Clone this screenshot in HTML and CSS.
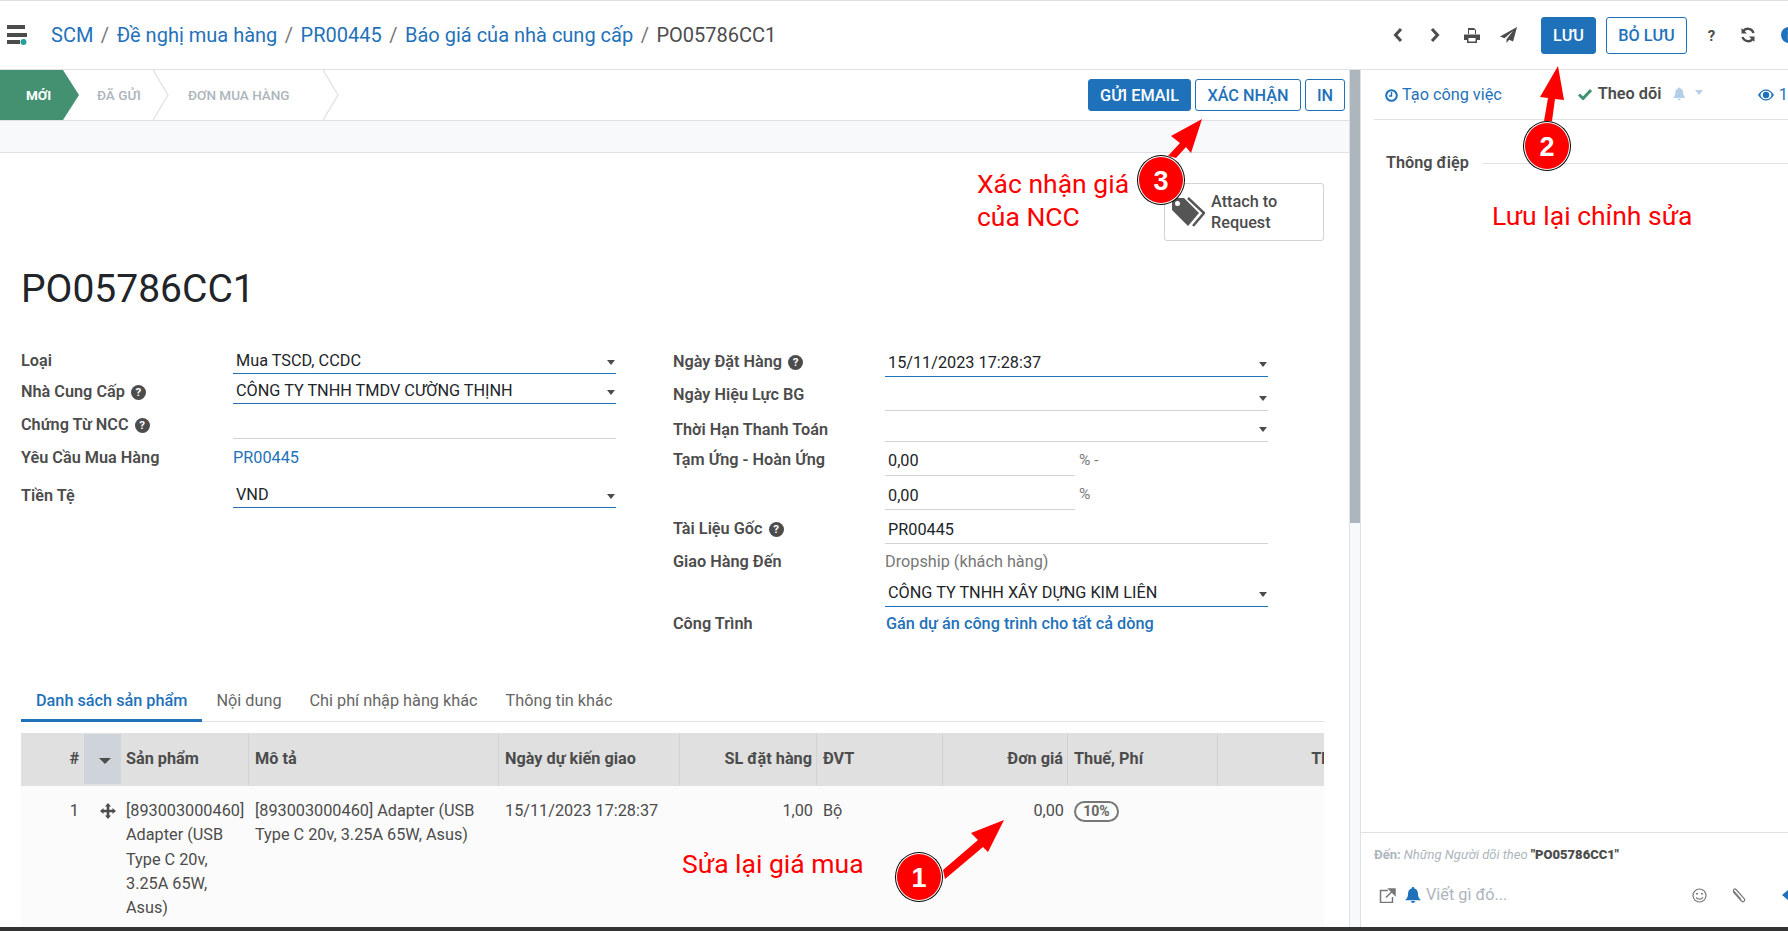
FILE: index.html
```html
<!DOCTYPE html>
<html lang="vi">
<head>
    <meta charset="UTF-8">
    <title>PO05786CC1</title>
    <link rel="stylesheet" href="styles.css">
</head>
<body>
<div class="page">
    <header class="topbar">
        <div class="topbar-left">
            <svg class="app-menu" width="22" height="20" viewBox="0 0 22 20">
                <rect x="0" y="0" width="18" height="4" fill="#4c4c4c"/>
                <rect x="0" y="8" width="20" height="4" fill="#4c4c4c"/>
                <rect x="0" y="15" width="13" height="4" fill="#4c4c4c"/>
                <circle cx="16.5" cy="17" r="3" fill="#2a9d9d"/>
            </svg>
            <nav class="breadcrumb">
                <a>SCM</a><span class="sep">/</span>
                <a>Đề nghị mua hàng</a><span class="sep">/</span>
                <a>PR00445</a><span class="sep">/</span>
                <a>Báo giá của nhà cung cấp</a><span class="sep">/</span>
                <span class="current">PO05786CC1</span>
            </nav>
        </div>
        <div class="topbar-right">
            <span class="tool"><svg width="10" height="16" viewBox="0 0 10 16"><path d="M8 2 2.5 8 8 14" fill="none" stroke="#4c4c4c" stroke-width="3"/></svg></span>
            <span class="tool"><svg width="10" height="16" viewBox="0 0 10 16"><path d="M2 2 7.5 8 2 14" fill="none" stroke="#4c4c4c" stroke-width="3"/></svg></span>
            <span class="tool"><svg width="16" height="15" viewBox="0 0 16 15"><path d="M4 0h6l2 2v4H4zM0 6.500h16V12h-3v3H3v-3H0z" fill="#4c4c4c"/><rect x="5" y="2" width="6" height="4" fill="#fff"/><rect x="4.500" y="10" width="7" height="3.500" fill="#fff"/></svg></span>
            <span class="tool"><svg width="17" height="16" viewBox="0 0 17 16"><path d="M17 0 0 9.500l4.500 1.800L13 4 6.500 12.200V16l2.600-3.200 4 1.700z" fill="#4c4c4c"/></svg></span>
            <button class="btn btn-primary btn-save">LƯU</button>
            <button class="btn btn-outline btn-discard">BỎ LƯU</button>
            <span class="tool tool-help">?</span>
            <span class="tool"><svg width="16" height="16" viewBox="0 0 16 16"><path d="M13.500 6A6 6 0 0 0 3 4.200M2.500 10A6 6 0 0 0 13 11.800" fill="none" stroke="#4c4c4c" stroke-width="2.400"/><path d="M1.500 1v5.500H7zM14.500 15V9.500H9z" fill="#4c4c4c"/></svg></span>
            <span class="tool tool-info"><svg width="16" height="16" viewBox="0 0 16 16"><circle cx="8" cy="8" r="8" fill="#1f72b9"/><rect x="6.800" y="7" width="2.400" height="5.500" fill="#fff"/><rect x="6.800" y="3.500" width="2.400" height="2.200" fill="#fff"/></svg></span>
        </div>
    </header>

    <div class="workspace">
        <main class="main">
            <div class="statusbar">
                <div class="steps">
                    <span class="step-active">MỚI</span>
                    <span class="step step-sent">ĐÃ GỬI</span>
                    <svg class="chevron" width="16" height="50" viewBox="0 0 16 50"><path d="M0 0 15 25 0 50" fill="none" stroke="#dee2e6" stroke-width="1.300"/></svg>
                    <span class="step step-order">ĐƠN MUA HÀNG</span>
                    <svg class="chevron" width="16" height="50" viewBox="0 0 16 50"><path d="M0 0 15 25 0 50" fill="none" stroke="#dee2e6" stroke-width="1.300"/></svg>
                </div>
                <div class="status-actions">
                    <button class="btn btn-primary btn-email">GỬI EMAIL</button>
                    <button class="btn btn-outline btn-confirm">XÁC NHẬN</button>
                    <button class="btn btn-outline btn-print">IN</button>
                </div>
            </div>
            <div class="band"></div>

            <section class="sheet">
                <div class="button-box">
                    <div class="stat-button">
                        <svg width="34" height="30" viewBox="0 0 34 30">
                            <path d="M1 1h12l15 15-11 13L1 13z" fill="#555"/>
                            <circle cx="6.500" cy="6.500" r="2.500" fill="#fff"/>
                            <path d="M17 1 33 16 22 29" fill="none" stroke="#555" stroke-width="2.500"/>
                        </svg>
                        <span>Attach to<br>Request</span>
                    </div>
                </div>
                <h1 class="title">PO05786CC1</h1>

                <div class="groups">
                    <div class="group group-left">
                        <div class="field row-a"><label>Loại</label><div class="value select line-focus">Mua TSCD, CCDC<i class="caret"></i></div></div>
                        <div class="field row-b"><label>Nhà Cung Cấp <i class="help">?</i></label><div class="value select line-focus">CÔNG TY TNHH TMDV CƯỜNG THỊNH<i class="caret"></i></div></div>
                        <div class="field row-c"><label>Chứng Từ NCC <i class="help">?</i></label><div class="value line"></div></div>
                        <div class="field row-d"><label>Yêu Cầu Mua Hàng</label><a class="value link">PR00445</a></div>
                        <div class="field row-e"><label>Tiền Tệ</label><div class="value select line-focus">VND<i class="caret"></i></div></div>
                    </div>
                    <div class="group group-right">
                        <div class="field row-1"><label>Ngày Đặt Hàng <i class="help">?</i></label><div class="value select line-focus">15/11/2023 17:28:37<i class="caret"></i></div></div>
                        <div class="field row-2"><label>Ngày Hiệu Lực BG</label><div class="value select line"><i class="caret"></i></div></div>
                        <div class="field row-3 field-flush"><label>Thời Hạn Thanh Toán</label><div class="value select line"><i class="caret"></i></div></div>
                        <div class="field row-4 row-advance"><label>Tạm Ứng - Hoàn Ứng</label><div class="percent"><div class="value line">0,00</div><span class="unit">% -</span></div></div>
                        <div class="field row-4"><label></label><div class="percent"><div class="value line">0,00</div><span class="unit">%</span></div></div>
                        <div class="field row-4"><label>Tài Liệu Gốc <i class="help">?</i></label><div class="value line">PR00445</div></div>
                        <div class="field row-7 field-flush"><label>Giao Hàng Đến</label><div class="value muted">Dropship (khách hàng)</div></div>
                        <div class="field row-8"><label></label><div class="value select line-focus">CÔNG TY TNHH XÂY DỰNG KIM LIÊN<i class="caret"></i></div></div>
                        <div class="field row-9 field-flush"><label>Công Trình</label><a class="value link link-strong">Gán dự án công trình cho tất cả dòng</a></div>
                    </div>
                </div>

                <div class="tabs">
                    <a class="tab tab-active">Danh sách sản phẩm</a>
                    <a class="tab">Nội dung</a>
                    <a class="tab">Chi phí nhập hàng khác</a>
                    <a class="tab">Thông tin khác</a>
                </div>

                <div class="table-wrap">
                    <table class="lines">
                        <colgroup>
                            <col class="c-num"><col class="c-handle"><col class="c-product"><col class="c-desc"><col class="c-date"><col class="c-qty"><col class="c-uom"><col class="c-price"><col class="c-tax"><col class="c-total">
                        </colgroup>
                        <thead>
                            <tr>
                                <th class="right no-div num">#</th>
                                <th class="sort no-div"><i class="caret caret-big"></i></th>
                                <th class="product">Sản phẩm</th>
                                <th>Mô tả</th>
                                <th>Ngày dự kiến giao</th>
                                <th class="right">SL đặt hàng</th>
                                <th>ĐVT</th>
                                <th class="right">Đơn giá</th>
                                <th>Thuế, Phí</th>
                                <th class="right no-div">Thành tiền</th>
                            </tr>
                        </thead>
                        <tbody>
                            <tr>
                                <td class="right num">1</td>
                                <td class="handle">
                                    <svg width="16" height="16" viewBox="0 0 16 16"><path d="M8 0 11 3.500H9.300v3.200h3.200V5L16 8l-3.500 3V9.300H9.300v3.200H11L8 16l-3-3.500h1.700V9.300H3.500V11L0 8l3.500-3v1.700h3.200V3.500H5z" fill="#4c4c4c"/></svg>
                                </td>
                                <td class="product">[893003000460] Adapter (USB Type C 20v, 3.25A 65W, Asus)</td>
                                <td>[893003000460] Adapter (USB Type C 20v, 3.25A 65W, Asus)</td>
                                <td>15/11/2023 17:28:37</td>
                                <td class="right">1,00</td>
                                <td>Bộ</td>
                                <td class="right">0,00</td>
                                <td><span class="badge">10%</span></td>
                                <td></td>
                            </tr>
                        </tbody>
                    </table>
                </div>
            </section>
        </main>

        <div class="scrollbar"><div class="thumb"></div></div>

        <aside class="chatter">
            <div class="chatter-top">
                <a class="activity">
                    <svg width="13" height="13" viewBox="0 0 13 13"><circle cx="6.500" cy="6.500" r="5.300" fill="none" stroke="#1f72b9" stroke-width="2"/><path d="M6.500 3v4H4" fill="none" stroke="#1f72b9" stroke-width="1.400"/></svg>
                    Tạo công việc
                </a>
                <span class="follow">
                    <svg width="14" height="12" viewBox="0 0 14 12"><path d="M1 6.500 5 10.500 13 2" fill="none" stroke="#449172" stroke-width="3"/></svg>
                    Theo dõi
                </span>
                <svg class="bell-light" width="17" height="18" viewBox="0 0 16 17"><path d="M8 0a1.500 1.500 0 0 1 1.500 1.500C12 2.200 13 4.500 13 7c0 3 1 4.500 3 6.500H0C2 11.500 3 10 3 7c0-2.500 1-4.800 3.500-5.500A1.500 1.500 0 0 1 8 0zM6 14.500h4a2 2 0 0 1-4 0z" fill="#b5cfe8"/></svg>
                <i class="caret caret-light"></i>
                <span class="followers">
                    <svg width="16" height="12" viewBox="0 0 16 12"><path d="M0 6c2-3.500 5-5.500 8-5.500S14 2.500 16 6c-2 3.500-5 5.500-8 5.500S2 9.500 0 6z" fill="#1f72b9"/><ellipse cx="8" cy="6" rx="5.500" ry="4.200" fill="#fff"/><circle cx="8" cy="6" r="3.200" fill="#1f72b9"/></svg>
                    1
                </span>
            </div>
            <div class="divider"><span>Thông điệp</span></div>
            <div class="thread"></div>
            <div class="composer">
                <div class="composer-to">Đến: <em>Những Người dõi theo</em> <b>"PO05786CC1"</b></div>
                <div class="composer-row">
                    <svg class="c-open" width="17" height="15" viewBox="0 0 17 15"><path d="M9 2.500H1.500v12h12V9" fill="none" stroke="#777" stroke-width="1.500"/><path d="M7 9.500 14 2.500M10 1h6v6z" fill="#777" stroke="#777" stroke-width="1.500"/></svg>
                    <svg class="c-bell" width="16" height="16" viewBox="0 0 16 16"><path d="M8 0a1.400 1.400 0 0 1 1.400 1.400C12 2 13 4.500 13 7c0 3 1 4.500 3 6.300H0C2 11.500 3 10 3 7c0-2.500 1-5 3.600-5.600A1.400 1.400 0 0 1 8 0zM6 14h4a2 2 0 0 1-4 0z" fill="#1f72b9"/></svg>
                    <span class="placeholder">Viết gì đó...</span>
                    <svg class="c-smile" width="15" height="15" viewBox="0 0 15 15"><circle cx="7.500" cy="7.500" r="6.500" fill="none" stroke="#777" stroke-width="1.200"/><circle cx="5" cy="5.800" r="1" fill="#777"/><circle cx="10" cy="5.800" r="1" fill="#777"/><path d="M4 9.300c1.500 2.500 5.500 2.500 7 0" fill="none" stroke="#777" stroke-width="1.200"/></svg>
                    <svg class="c-clip" width="15" height="15" viewBox="0 0 15 15"><path d="M2 3.500 10.500 13c2 1.800 4.300-.7 2.500-2.700L5 1.500C3.700.2 1.500 1.800 3 3.500l7 8" fill="none" stroke="#777" stroke-width="1.200"/></svg>
                    <svg class="c-send" width="12" height="10" viewBox="0 0 12 10"><path d="M0 5 6 0v3h6v4H6v3z" fill="#1f72b9"/></svg>
                </div>
            </div>
        </aside>
    </div>
    <div class="bottom-edge"></div>

    <!-- chu thich do tren anh chup -->
    <svg class="marks" width="1788" height="931" viewBox="0 0 1788 931">
        <g fill="#f00">
            <polygon points="1558,66 1564,100 1555,99 1552,121 1544,121 1548,98 1540,97"/>
            <polygon points="1202,119 1191,153 1186,147 1176,158 1168,156 1180,143 1171,136"/>
            <polygon points="1004,820 988,852 983,847 945,879 943,870 978,840 971,833"/>
        </g>
        <g>
            <ellipse cx="1547" cy="146" rx="24" ry="25" fill="#000"/>
            <ellipse cx="1547" cy="146" rx="23" ry="24" fill="#fff"/>
            <ellipse cx="1547" cy="146" rx="22" ry="23" fill="#f00"/>
            <ellipse cx="1161" cy="180" rx="24" ry="25" fill="#000"/>
            <ellipse cx="1161" cy="180" rx="23" ry="24" fill="#fff"/>
            <ellipse cx="1161" cy="180" rx="22" ry="23" fill="#f00"/>
            <ellipse cx="919" cy="877" rx="24" ry="25" fill="#000"/>
            <ellipse cx="919" cy="877" rx="23" ry="24" fill="#fff"/>
            <ellipse cx="919" cy="877" rx="22" ry="23" fill="#f00"/>
        </g>
        <g class="mark-num">
            <text x="1547" y="156">2</text>
            <text x="1161" y="190">3</text>
            <text x="919" y="887">1</text>
        </g>
    </svg>
    <div class="note note-confirm">Xác nhận giá<br>của NCC</div>
    <div class="note note-save">Lưu lại chỉnh sửa</div>
    <div class="note note-price">Sửa lại giá mua</div>
</div>
</body>
</html>
```

FILE: styles.css
```css
/* Trang bao gia */
html, body {
    margin: 0;
    padding: 0;
}
body {
    font-family: Roboto, "Liberation Sans", sans-serif;
    font-size: 16.25px;
    line-height: 24px;
    color: #4c4c4c;
    background: #fff;
}
.page {
    position: relative;
    width: 1788px;
    height: 931px;
    overflow: hidden;
    display: flex;
    flex-direction: column;
}
a {
    color: #1f72b9;
    text-decoration: none;
}
i.caret {
    display: inline-block;
    width: 0;
    height: 0;
    border-top: 5px solid #4c4c4c;
    border-left: 4px solid transparent;
    border-right: 4px solid transparent;
}

/* Thanh tren */
.topbar {
    flex: none;
    height: 68px;
    border-top: 1px solid #e0e0e0;
    border-bottom: 1px solid #dee2e6;
    display: flex;
    align-items: center;
}
.topbar-left {
    flex: none;
    width: 1379px;
    display: flex;
    align-items: center;
}
.app-menu {
    margin-left: 7px;
    margin-top: -1px;
}
.breadcrumb {
    margin-left: 22px;
    font-size: 20px;
    display: flex;
    gap: 7.5px;
}
.breadcrumb .sep {
    color: #777;
}
.breadcrumb .current {
    color: #4c4c4c;
}
.topbar-right {
    flex: none;
    display: flex;
    align-items: center;
}
.tool {
    flex: none;
    width: 37px;
    height: 37px;
    display: flex;
    align-items: center;
    justify-content: center;
}
.tool-help {
    margin-left: 7px;
    width: 35px;
    font-weight: 700;
    font-size: 15px;
    padding-top: 2px;
    box-sizing: border-box;
}
.tool-info {
    margin-left: 4px;
}
.btn {
    font-family: inherit;
    font-size: 16.25px;
    font-weight: 500;
    height: 32px;
    padding: 0;
    border-radius: 3px;
    border: 1px solid #1f72b9;
    cursor: pointer;
}
.btn-primary {
    background-color: #1f72b9;
    color: #fff;
}
.btn-outline {
    background-color: #fff;
    color: #1f72b9;
}
.btn-save {
    margin-left: 14px;
    width: 55px;
    height: 37px;
}
.btn-discard {
    margin-left: 10px;
    width: 81px;
    height: 37px;
}

/* Khu vuc chinh */
.workspace {
    flex: 1;
    min-height: 0;
    display: flex;
}
.main {
    flex: none;
    width: 1349px;
    display: flex;
    flex-direction: column;
    min-height: 0;
}
.statusbar {
    flex: none;
    height: 50px;
    border-bottom: 1px solid #dee2e6;
    display: flex;
    justify-content: space-between;
}
.steps {
    display: flex;
    align-items: center;
    font-size: 13.5px;
    font-weight: 500;
    color: #adb5bd;
}
.step-active {
    width: 79px;
    height: 50px;
    box-sizing: border-box;
    padding-left: 26px;
    line-height: 50px;
    color: #fff;
    font-weight: 700;
    background: #449172;
    clip-path: polygon(0 0, 63px 0, 79px 25px, 63px 50px, 0 50px);
}
.step-sent {
    margin-left: 18px;
    width: 56px;
}
.step-order {
    margin-left: 19px;
    width: 135px;
}
.status-actions {
    display: flex;
    gap: 4px;
    padding: 9px 4px 0 0;
}
.btn-email { width: 103px; }
.btn-confirm { width: 106px; }
.btn-print { width: 40px; }
.band {
    flex: none;
    height: 31px;
    background: #f8f9fa;
    border-bottom: 1px solid #dee2e6;
}
.sheet {
    flex: 1;
    min-height: 0;
    padding: 0 25px 0 21px;
    display: flex;
    flex-direction: column;
}
.button-box {
    display: flex;
    justify-content: flex-end;
    padding-top: 30px;
}
.stat-button {
    width: 160px;
    height: 58px;
    box-sizing: border-box;
    border: 1px solid #ced4da;
    border-radius: 3px;
    display: flex;
    align-items: center;
    gap: 6px;
    padding-left: 6px;
    font-weight: 500;
    font-size: 16.25px;
    line-height: 21px;
}
.title {
    margin: 25px 0 0;
    font-size: 39px;
    line-height: 46px;
    font-weight: 400;
    color: #212529;
}

/* Form */
.groups {
    margin-top: 33px;
    display: flex;
    height: 292px;
}
.group-left {
    width: 652px;
    flex: none;
}
.group-right {
    flex: none;
    margin-top: 2px;
}
.field {
    display: grid;
    align-items: end;
    grid-template-columns: 212px 383px;
}
.field label {
    font-weight: 600;
    padding-bottom: 1px;
}
.group-left .row-b label,
.group-left .row-e label {
    padding-bottom: 0;
}
.group-left .row-c label {
    padding-bottom: 2px;
}
.group-right .field label {
    padding-bottom: 3px;
}
.group-right .row-2 label,
.group-right .row-advance label {
    padding-bottom: 4px;
}
.group-right .field-flush label {
    padding-bottom: 0;
}
.row-a { height: 29px; }
.row-b { height: 30px; }
.row-c { height: 35px; }
.row-d { height: 32px; }
.row-e { height: 37px; }
.row-1 { height: 30px; }
.row-2 { height: 34px; }
.row-3 { height: 31px; }
.row-4 { height: 34px; }
.row-7 { height: 30px; }
.row-8 { height: 33px; }
.row-9 { height: 29px; }
.row-d { align-items: start; }
.row-d label, .row-d .value { padding-top: 7px; }
.value {
    position: relative;
    display: block;
    color: #212529;
    padding-left: 3px;
    min-height: 24px;
}
.line {
    border-bottom: 1px solid #ced4da;
    padding-bottom: 1px;
}
.line-focus {
    border-bottom: 1px solid #1f72b9;
}
.group-right .line-focus {
    padding-bottom: 1px;
}
.row-advance .value.line {
    padding-bottom: 2px;
}
.select .caret {
    position: absolute;
    right: 1px;
    top: 11px;
}
.group-left .value.link {
    padding-left: 0;
    color: #1f72b9;
}
.group-right .value.muted {
    padding-left: 0;
    color: #777;
}
.group-right .value.link {
    padding-left: 1px;
    color: #1f72b9;
}
.link-strong {
    font-weight: 500;
}
.percent {
    display: flex;
    align-items: flex-end;
}
.percent .value {
    width: 190px;
    flex: none;
    box-sizing: border-box;
}
.unit {
    color: #777;
    font-size: 15.5px;
    margin-left: 4px;
    padding-bottom: 4px;
}
.help {
    display: inline-block;
    width: 15px;
    height: 15px;
    border-radius: 50%;
    background: #4c4c4c;
    color: #fff;
    font-style: normal;
    font-weight: 700;
    font-size: 11.5px;
    line-height: 15px;
    text-align: center;
    margin-left: 2px;
    vertical-align: 1px;
}

/* Tabs */
.tabs {
    flex: none;
    margin-top: 44px;
    height: 40px;
    border-bottom: 1px solid #dee2e6;
    display: flex;
}
.tab {
    padding: 8px 14px 0;
    color: #666;
    height: 32px;
}
.tab-active {
    padding: 8px 15px 0;
    color: #1f72b9;
    font-weight: 500;
    border-bottom: 3px solid #1f72b9;
    height: 30px;
}

/* Bang */
.table-wrap {
    flex: 1;
    min-height: 0;
    margin-top: 11px;
    overflow: hidden;
    background: #fbfbfb;
}
.lines {
    width: 1372px;
    table-layout: fixed;
    border-collapse: separate;
    border-spacing: 0;
}
.c-num { width: 63px; }
.c-handle { width: 37px; }
.c-product { width: 128px; }
.c-desc { width: 250px; }
.c-date { width: 181px; }
.c-qty { width: 137px; }
.c-uom { width: 126px; }
.c-price { width: 125px; }
.c-tax { width: 150px; }
.c-total { width: 175px; }
.lines th {
    height: 50px;
    padding: 0 4px 0 6px;
    background-color: #e0e0e0;
    background-clip: padding-box;
    border-top: 1px solid #e0e0e0;
    border-bottom: 2px solid #e0e0e0;
    border-right: 1px solid #d2d2d2;
    font-weight: 700;
    text-align: left;
    white-space: nowrap;
}
.lines th.no-div {
    border-right: 0;
}
.lines th.right {
    text-align: right;
}
.lines th.product,
.lines td.product {
    padding-left: 5px;
}
.lines th.sort {
    background-color: #ced4da;
    text-align: center;
    padding-left: 8px;
}
.caret-big {
    border-top-width: 6px !important;
    border-left-width: 6px !important;
    border-right-width: 6px !important;
}
.lines td {
    padding: 13px 4px 0 6px;
    vertical-align: top;
    line-height: 24.3px;
    color: #4c4c4c;
}
.lines th.num,
.lines td.num {
    padding-right: 5px;
}
.lines td.right {
    text-align: right;
}
.lines td.handle {
    padding: 16px 0 0 16px;
}
.badge {
    display: inline-block;
    height: 17px;
    width: 41px;
    border: 2.5px solid #777;
    border-radius: 11px;
    line-height: 17px;
    text-align: center;
    font-size: 14px;
    font-weight: 700;
    color: #666;
}

/* Thanh cuon */
.scrollbar {
    flex: none;
    width: 10px;
    background: #f8f9fa;
    border-left: 1px solid #dee2e6;
    border-right: 1px solid #dee2e6;
}
.thumb {
    height: 453px;
    background: #adb5bd;
}

/* Chatter */
.chatter {
    flex: 1;
    min-width: 0;
    display: flex;
    flex-direction: column;
}
.chatter-top {
    flex: none;
    height: 49px;
    margin-left: 13px;
    padding-left: 11px;
    border-bottom: 1px solid #dee2e6;
    display: flex;
    align-items: center;
    white-space: nowrap;
}
.activity {
    display: flex;
    align-items: center;
    gap: 4px;
    margin-top: 1px;
}
.follow {
    margin-left: 76px;
    display: flex;
    align-items: center;
    gap: 6px;
    font-weight: 600;
    margin-top: -2px;
}
.bell-light {
    margin-left: 12px;
    margin-top: -2px;
}
.caret-light {
    margin-left: 9px;
    border-top-color: #b5cfe8 !important;
    margin-top: -4px;
}
.followers {
    margin-left: 55px;
    display: flex;
    align-items: center;
    gap: 5px;
    color: #1f72b9;
}
.divider {
    flex: none;
    margin: 31px 0 0 25px;
    display: flex;
    align-items: center;
    gap: 14px;
    font-weight: 600;
}
.divider::after {
    content: "";
    flex: 1;
    height: 1px;
    background: #dee2e6;
}
.thread {
    flex: 1;
}
.composer {
    flex: none;
    height: 94px;
    border-top: 1px solid #dee2e6;
    padding-left: 13px;
}
.composer-to {
    margin-top: 10px;
    font-size: 13px;
    color: #adb5bd;
    font-weight: 700;
}
.composer-to em {
    font-weight: 400;
}
.composer-to b {
    color: #4c4c4c;
}
.composer-row {
    margin-top: 16px;
    display: flex;
    align-items: center;
}
.composer-row > * {
    flex: none;
}
.c-open { margin-left: 5px; }
.c-bell { margin-left: 9px; }
.placeholder {
    margin-left: 5px;
    width: 266px;
    color: #adb5bd;
}
.c-smile { margin-left: 0; }
.c-clip { margin-left: 24px; }
.c-send { margin-left: 36px; }

.bottom-edge {
    flex: none;
    height: 4px;
    background: #333;
}

/* Chu thich do */
.marks {
    position: absolute;
    left: 0;
    top: 0;
    pointer-events: none;
}
.mark-num text {
    font-family: "Liberation Sans", Arial, sans-serif;
    font-size: 27px;
    font-weight: 700;
    fill: #fff;
    text-anchor: middle;
}
.note {
    position: absolute;
    color: #f00;
    font-size: 26.5px;
    line-height: 33px;
}
.note-confirm { left: 977px; top: 167px; }
.note-save { left: 1492px; top: 199px; }
.note-price { left: 682px; top: 847px; }
```
